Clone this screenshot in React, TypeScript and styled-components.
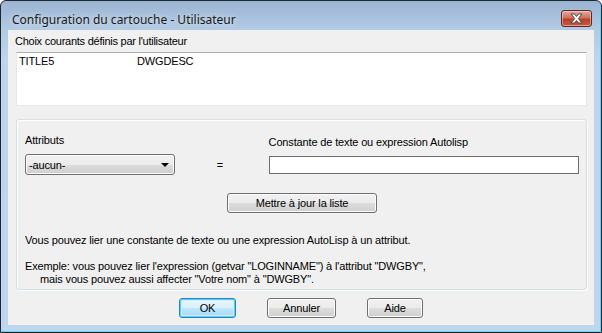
import React from 'react';
import styled, { createGlobalStyle, css } from 'styled-components';

const GlobalStyle = createGlobalStyle`
    html, body {
        margin: 0;
        padding: 0;
        background: #ffffff;
    }
    * {
        box-sizing: border-box;
    }
`;

const Window = styled.div`
    width: 602px;
    height: 333px;
    display: flex;
    flex-direction: column;
    border: 1px solid #1d2733;
    border-radius: 6px 6px 0 0;
    padding: 0 7px 7px 7px;
    background: linear-gradient(180deg, #9bb4d1 0px, #b3cae4 28px, #bed5ed 60px, #bfd6ee 100%);
    box-shadow: inset -1px -1px 0 #62d3f2;
    overflow: hidden;
`;

const TitleBar = styled.div`
    height: 29px;
    display: flex;
    justify-content: space-between;
    align-items: flex-start;
    flex-shrink: 0;
`;

const Title = styled.div`
    font-family: "Noto Sans", "Open Sans", sans-serif;
    font-size: 12px;
    color: #1a1a1a;
    padding: 11px 0 0 4px;
    line-height: 15px;
    text-shadow: 0 0 6px rgba(255, 255, 255, 0.8);
`;

const CloseButton = styled.div`
    width: 31px;
    height: 17px;
    margin: 9px 2px 0 0;
    border: 1px solid #5a2a28;
    border-radius: 3px;
    background: linear-gradient(180deg, #e5a89c 0%, #d0705f 45%, #bb3f2a 55%, #c8593f 100%);
    box-shadow: inset 0 0 0 1px rgba(255, 220, 210, 0.5);
    display: flex;
    align-items: center;
    justify-content: center;
`;

const Client = styled.div`
    flex: 1;
    background: #f0f0f0;
    padding: 4px 7px 0 8px;
    display: flex;
    flex-direction: column;
    font-family: "Liberation Sans", Arial, sans-serif;
    font-size: 11px;
    letter-spacing: -0.15px;
    color: #000;
`;

const ListLabel = styled.div`
    line-height: 14px;
    height: 18px;
    margin-left: -1px;
    letter-spacing: -0.25px;
`;

const ListBox = styled.div`
    height: 54px;
    background: #fff;
    border: 1px solid #e3e9ef;
    border-top-color: #abadb3;
    padding: 2px 0 0 2px;
`;

const ListRow = styled.div`
    display: flex;
    line-height: 13px;
`;

const ListCell = styled.span<{ $width: number }>`
    width: ${p => p.$width}px;
`;

const Group = styled.div`
    margin-top: 13px;
    height: 171px;
    border: 1px solid #d5dfe5;
    border-radius: 3px;
    box-shadow: inset 1px 1px 0 #fff, 1px 1px 0 #fff;
    padding: 14px 7px 0 8px;
    display: flex;
    flex-direction: column;
`;

const FieldRow = styled.div`
    display: flex;
    align-items: flex-end;
`;

const Field = styled.div<{ $width: number }>`
    width: ${p => p.$width}px;
    display: flex;
    flex-direction: column;
    gap: 7px;
`;

const FieldLabel = styled.div`
    line-height: 13px;
`;

const Equals = styled.div`
    width: 94px;
    padding-left: 42px;
    line-height: 13px;
    padding-bottom: 3px;
`;

const buttonFace = css`
    border: 1px solid #707070;
    border-radius: 3px;
    background: linear-gradient(180deg, #f2f2f2 0%, #ebebeb 50%, #dddddd 51%, #cfcfcf 100%);
    box-shadow: inset 0 0 0 1px #fcfcfc;
`;

const Combo = styled.div`
    ${buttonFace};
    height: 21px;
    display: flex;
    align-items: center;
    justify-content: space-between;
    padding: 0 4px 0 3px;
`;

const ComboArrow = styled.span`
    width: 0;
    height: 0;
    border-left: 4px solid transparent;
    border-right: 4px solid transparent;
    border-top: 4px solid #000;
    margin-right: 1px;
`;

const TextInput = styled.div`
    height: 18px;
    margin-bottom: 1px;
    background: #fff;
    border: 1px solid #6f6f6f;
`;

const PushButton = styled.div<{ $width: number; $default?: boolean }>`
    ${buttonFace};
    width: ${p => p.$width}px;
    height: 20px;
    display: flex;
    align-items: center;
    justify-content: center;
    line-height: 13px;
    ${p => p.$default && css`
        border-color: #3c7fb1;
        background: linear-gradient(180deg, #eaf6fd 0%, #d9f0fc 50%, #bee6fd 51%, #a7d9f5 100%);
        box-shadow: inset 0 0 0 1px #48d2ff, inset 0 0 0 2px #cdefff;
    `}
`;

const CenterRow = styled.div<{ $top: number }>`
    display: flex;
    justify-content: center;
    margin-top: ${p => p.$top}px;
`;

const Note = styled.div<{ $top: number; $indent?: number }>`
    margin-top: ${p => p.$top}px;
    padding-left: ${p => p.$indent ?? 0}px;
    line-height: 13px;
    white-space: nowrap;
`;

const ButtonBar = styled.div`
    display: flex;
    justify-content: center;
    gap: 31px;
    margin-top: 8px;
    padding-right: 1px;
`;

const CloseGlyph = () => (
    <svg width="13" height="11" viewBox="0 0 13 11">
        <path
            d="M1 1 H4.5 L6.5 3.5 L8.5 1 H12 L8.3 5.5 L12 10 H8.5 L6.5 7.5 L4.5 10 H1 L4.7 5.5 Z"
            fill="#ffffff"
            stroke="#4a4a4a"
            strokeWidth="1"
            strokeLinejoin="round"
        />
    </svg>
);

const App: React.FC = () => {
    return (
        <>
            <GlobalStyle />
            <Window>
                <TitleBar>
                    <Title>Configuration du cartouche - Utilisateur</Title>
                    <CloseButton>
                        <CloseGlyph />
                    </CloseButton>
                </TitleBar>
                <Client>
                    <ListLabel>Choix courants définis par l'utilisateur</ListLabel>
                    <ListBox>
                        <ListRow>
                            <ListCell $width={118}>TITLE5</ListCell>
                            <ListCell $width={100}>DWGDESC</ListCell>
                        </ListRow>
                    </ListBox>
                    <Group>
                        <FieldRow>
                            <Field $width={150}>
                                <FieldLabel>Attributs</FieldLabel>
                                <Combo>
                                    <span>-aucun-</span>
                                    <ComboArrow />
                                </Combo>
                            </Field>
                            <Equals>=</Equals>
                            <Field $width={311}>
                                <FieldLabel>Constante de texte ou expression Autolisp</FieldLabel>
                                <TextInput />
                            </Field>
                        </FieldRow>
                        <CenterRow $top={18}>
                            <PushButton $width={150}>Mettre à jour la liste</PushButton>
                        </CenterRow>
                        <Note $top={21}>Vous pouvez lier une constante de texte ou une expression AutoLisp à un attribut.</Note>
                        <Note $top={13}>Exemple: vous pouvez lier l'expression (getvar "LOGINNAME") à l'attribut "DWGBY",</Note>
                        <Note $top={0} $indent={15}>mais vous pouvez aussi affecter "Votre nom" à "DWGBY".</Note>
                    </Group>
                    <ButtonBar>
                        <PushButton $width={57} $default>OK</PushButton>
                        <PushButton $width={69}>Annuler</PushButton>
                        <PushButton $width={56}>Aide</PushButton>
                    </ButtonBar>
                </Client>
            </Window>
        </>
    );
};

export default App;
